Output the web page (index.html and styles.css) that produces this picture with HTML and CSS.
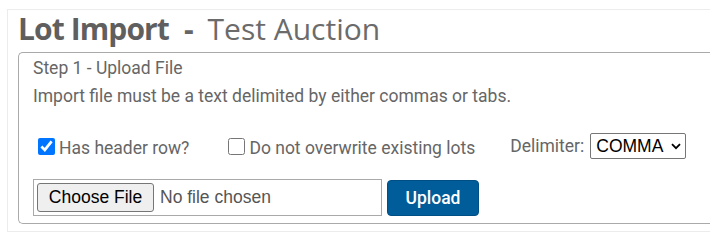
FILE: index.html
```html
<!DOCTYPE html>
<html>
<head>
<meta charset="utf-8">
<link rel="stylesheet" href="styles.css">
</head>
<body>
<div class="panel">
  <h1 class="title"><span class="title-main">Lot Import</span><span class="title-sep">-</span><span class="title-sub">Test Auction</span></h1>
  <div class="step">
    <div class="step-title">Step 1 - Upload File</div>
    <p class="hint">Import file must be a text delimited by either commas or tabs.</p>
    <div class="options">
      <label class="check check-header"><input type="checkbox" checked><span>Has header row?</span></label>
      <label class="check check-overwrite"><input type="checkbox"><span>Do not overwrite existing lots</span></label>
      <label class="delim"><span>Delimiter:</span>
        <span class="select-wrap">
          <select class="delim-select"><option>COMMA</option><option>TAB</option></select>
          <svg class="chev" width="10" height="7" viewBox="0 0 10 7"><path d="M1 1.2 L5 5.2 L9 1.2" fill="none" stroke="#000" stroke-width="1.8"/></svg>
        </span>
      </label>
    </div>
    <div class="upload-row">
      <input class="file" type="file">
      <button class="upload-btn" type="button">Upload</button>
    </div>
  </div>
</div>
</body>
</html>
```
FILE: styles.css
```css
html, body {
  margin: 0;
  padding: 0;
  background: #fff;
}
body {
  font-family: Roboto, "Liberation Sans", sans-serif;
  font-size: 17.5px;
  color: #666;
}
.panel {
  margin: 9px 0 0 7px;
  width: 703px;
  height: 223px;
  box-sizing: border-box;
  border: 1px solid #ececec;
  border-right: none;
}
.title {
  margin: 0 0 5px 0;
  padding: 1px 0 0 10px;
  font-family: "Open Sans", sans-serif;
  font-size: 30px;
  line-height: 36px;
  font-weight: 400;
  color: #666;
  white-space: nowrap;
}
.title-main {
  font-weight: 700;
  letter-spacing: -0.9px;
  color: #5f5f5f;
}
.title-sep {
  font-weight: 700;
  margin: 0 14px 0 15px;
}
.title-sub {
  color: #6b6b6b;
}
.step {
  margin-left: 10px;
  border: 1px solid #aaa;
  border-right: none;
  border-radius: 5px 0 0 5px;
  padding: 1px 0 7px 14px;
}
.step-title, .hint {
  line-height: 28px;
  margin: 0;
}
.options {
  margin-top: 23px;
  height: 26px;
  display: flex;
  align-items: center;
}
.check {
  display: flex;
  align-items: center;
}
.check input {
  width: 17px;
  height: 17px;
  margin: 0 4px 0 5px;
}
.check span {
  position: relative;
  top: 2px;
}
.check-overwrite {
  margin-left: 34px;
}
.delim {
  margin-left: 35px;
  display: flex;
  align-items: center;
}
.delim > span:first-child {
  margin-right: 6px;
}
.select-wrap {
  position: relative;
  display: inline-block;
  height: 26px;
}
.delim-select {
  appearance: none;
  -webkit-appearance: none;
  font-family: "Liberation Sans", Arial, sans-serif;
  font-size: 17.5px;
  color: #000;
  height: 26px;
  width: 96px;
  border: 1px solid #767676;
  border-radius: 2px;
  background: #fff;
  padding: 0 0 0 5px;
  margin: 0;
}
.chev {
  position: absolute;
  right: 5px;
  top: 10px;
  pointer-events: none;
}
.upload-row {
  margin-top: 20px;
  display: flex;
  align-items: center;
}
.file {
  width: 349px;
  height: 37px;
  box-sizing: border-box;
  border: 1px solid #a9a9a9;
  padding: 3px;
  font-family: "Liberation Sans", Arial, sans-serif;
  font-size: 17.5px;
  color: #555;
}
.file::file-selector-button {
  font-family: "Liberation Sans", Arial, sans-serif;
  font-size: 17.5px;
  color: #000;
  height: 29px;
  width: 117px;
  margin-right: 6px;
  border: 1px solid #767676;
  border-radius: 3px;
  background: #efefef;
}
.upload-btn {
  margin-left: 5px;
  width: 92px;
  height: 36px;
  background: #005d9a;
  border: 1px solid #004f84;
  border-radius: 4px;
  color: #fff;
  font-family: Roboto, "Liberation Sans", sans-serif;
  font-size: 17.5px;
  font-weight: 500;
}
```
